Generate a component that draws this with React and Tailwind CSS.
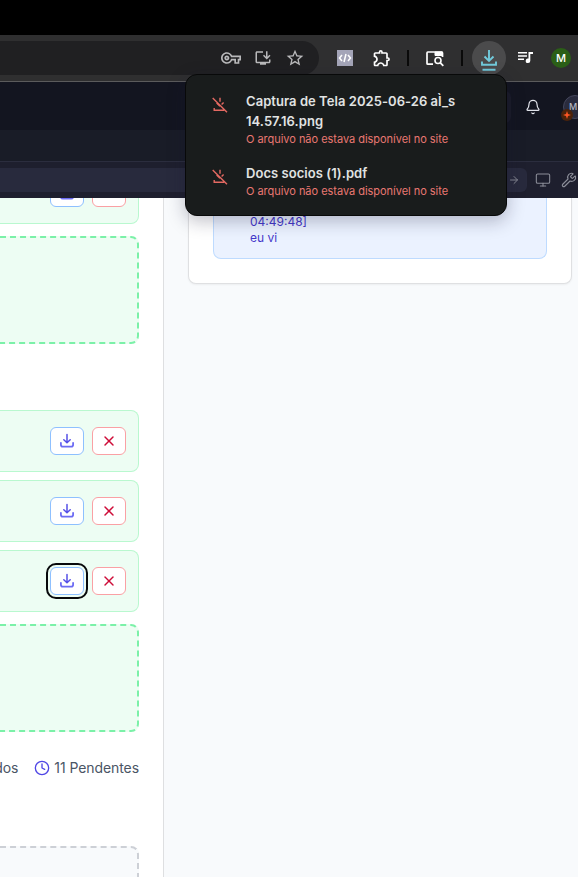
import { MdOutlineVpnKey, MdOutlineInstallDesktop, MdStarBorder, MdOutlineExtension } from "react-icons/md";
import { Bell, Monitor, Wrench, ArrowRight, X, Clock } from "lucide-react";

function TrayIcon() {
  return (
    <svg width="16" height="16" viewBox="0 0 16 16" fill="none" strokeLinecap="round" strokeLinejoin="round">
      <path d="M1.900 9.800v1.900c0 1.200.7 1.900 1.900 1.900h8.400c1.200 0 1.900-.7 1.900-1.900V9.800" stroke="#6d6cf3" strokeWidth="1.800" />
      <path d="M8 1.500v8M4.800 6.700 8 9.700l3.200-3" stroke="#5650e6" strokeWidth="1.500" />
    </svg>
  );
}

function FailedDownloadIcon() {
  return (
    <svg className="mt-[6px] shrink-0" width="16" height="16" viewBox="0 0 16 16" fill="none" stroke="#e46962" strokeWidth="1.400">
      <path d="M.7.9l14.300 14.300M8 .8v4M11.600 5.500 9.600 7.500M4.600 6 8 9.200M2.200 11v2.300h10" />
    </svg>
  );
}

function FileRow({ focused = false }) {
  return (
    <div className="flex h-[62px] shrink-0 items-center justify-end gap-2 rounded-r-lg border border-l-0 border-[#b9f8cf] bg-[#edfdf3] pr-3">
      <button
        className={
          "flex h-7 w-[34px] items-center justify-center rounded-md border border-[#8ec0ff] bg-white " +
          (focused ? "outline-2 outline-offset-2 outline-[#080a0c]" : "")
        }
      >
        <TrayIcon />
      </button>
      <button className="flex h-7 w-[34px] items-center justify-center rounded-md border border-[#faa0a4] bg-white">
        <X size={16} strokeWidth={2.200} color="#ce0c38" />
      </button>
    </div>
  );
}

function DropArea() {
  return <div className="h-[108px] shrink-0 rounded-r-lg border-2 border-l-0 border-dashed border-[#7bf1a8] bg-[#edfdf3]" />;
}

function Toolbar() {
  return (
    <div className="flex h-[47px] shrink-0 border-b border-[#5b5b5c] bg-[#2f2f30] pt-[6px]">
      <div className="flex h-[34px] w-[319px] shrink-0 items-center justify-end rounded-r-full bg-[#202022] pr-[14px] text-[#b9b9bb]">
        <MdOutlineVpnKey size={20} className="mr-[13px]" />
        <MdOutlineInstallDesktop size={18} className="mr-[13px]" />
        <MdStarBorder size={20} />
      </div>
      <div className="flex h-[34px] items-center">
        <div className="ml-[18px] flex size-4 items-center justify-center bg-[#a4a5b8]">
          <svg width="14" height="10" viewBox="0 0 14 10" fill="none" stroke="white" strokeWidth="1.500">
            <path d="M4 2 1.500 5 4 8M10 2l2.500 3L10 8M8 1 6 9" />
          </svg>
        </div>
        <MdOutlineExtension size={20} color="white" className="ml-[19px]" />
        <div className="ml-[15px] h-4 w-[2px] bg-[#0a0a0a]" />
        <svg className="ml-[16px]" width="20" height="18" viewBox="0 0 20 18" fill="none" stroke="white">
          <path d="M8 15.200H2.800c-.6 0-.8-.3-.8-.8V3.900c0-.6.3-.9.8-.9h13.900c.5 0 .8.3.8.9V8" strokeWidth="1.700" />
          <path d="M10 3h7.500v3.500H10z" fill="white" strokeWidth="1" />
          <circle cx="13" cy="11.500" r="3" strokeWidth="1.600" />
          <path d="m15.300 13.800 3 3" strokeWidth="1.800" />
        </svg>
        <div className="ml-[16px] h-4 w-[2px] bg-[#0a0a0a]" />
        <div className="ml-[9px] flex size-[34px] items-center justify-center rounded-full bg-[#4b4b4c]">
          <svg className="mt-[4px]" width="18" height="23" viewBox="0 0 18 23" fill="none" stroke="#72cbdc" strokeWidth="1.900">
            <path d="M9 1v11M4.500 7.500 9 12l4.500-4.500M2 12.500v3.300h14v-3.300M2.500 20.800h13" />
          </svg>
        </div>
        <svg className="ml-[12px]" width="16" height="14" viewBox="0 0 16 14" fill="white">
          <path d="M0 1h9v1.600H0zM0 4.200h9v1.600H0zM0 7.400h6v1.600H0z" />
          <path d="M10.500 1H15v2h-2.700v6.700a2.300 2.300 0 1 1-1.800-2.200z" />
        </svg>
        <div className="ml-[17px] flex size-5 items-center justify-center rounded-full bg-[#2b5f17] text-[11px] font-medium text-white">M</div>
      </div>
    </div>
  );
}

function SiteHeader() {
  return (
    <div className="shrink-0 bg-[#131520]">
      <div className="flex h-12 items-center justify-end overflow-hidden pt-[2px]">
        <div className="h-8 w-6 shrink-0 rounded-md bg-[#1a1b28]" />
        <Bell size={16} strokeWidth={1.800} color="#e1e3ea" className="mr-[22px] ml-[14px]" />
        <div className="relative h-6 w-[15px] shrink-0">
          <div className="flex size-6 items-center justify-start rounded-full border border-[#44465b] bg-[#292b3d] pl-[5px] text-[9px] font-medium text-[#b3b5c1]">M</div>
          <div className="absolute top-[14px] left-[-2px] flex size-3 items-center justify-center rounded-full bg-[#4b230b]">
            <svg width="8" height="8" viewBox="0 0 8 8">
              <path d="M4 0 5 3 8 4 5 5 4 8 3 5 0 4l3-1z" fill="#ff5724" />
            </svg>
          </div>
        </div>
      </div>
      <div className="h-8 border-b border-[#2b2d3e] bg-[#191c27]" />
      <div className="flex h-9 items-center overflow-hidden bg-[#1e1f2e]">
        <div className="flex h-6 w-[527px] shrink-0 items-center justify-end rounded-r-md bg-[#282a3d] pr-[7px]">
          <ArrowRight size={12} strokeWidth={2} color="#858793" />
        </div>
        <Monitor size={16} strokeWidth={1.600} color="#8b8d98" className="ml-2 shrink-0" />
        <Wrench size={16} strokeWidth={1.700} color="#8b8d98" className="ml-[10px] shrink-0" />
      </div>
    </div>
  );
}

function DownloadsPopup() {
  return (
    <div className="absolute top-[74px] left-[185px] flex h-[142px] w-[322px] flex-col gap-[12px] rounded-xl border border-[#080909] bg-[#191c1c] pt-[16px] pl-[26px] shadow-[0_5px_18px_rgba(20,20,50,0.28)]">
      <div className="flex gap-[18px]">
        <FailedDownloadIcon />
        <div className="whitespace-nowrap">
          <p className="text-[13px] leading-5 font-semibold tracking-[0.05px] text-[#e1e3e3]">Captura de Tela 2025-06-26 aÌ_s<br />14.57.16.png</p>
          <p className="text-[11px] leading-4 tracking-[-0.03px] text-[#e97872]">O arquivo não estava disponível no site</p>
        </div>
      </div>
      <div className="flex gap-[18px] pt-[4px]">
        <FailedDownloadIcon />
        <div className="whitespace-nowrap">
          <p className="text-[13px] leading-5 font-semibold tracking-[0.05px] text-[#e1e3e3]">Docs socios (1).pdf</p>
          <p className="text-[11px] leading-4 tracking-[-0.03px] text-[#e97872]">O arquivo não estava disponível no site</p>
        </div>
      </div>
    </div>
  );
}

export default function App() {
  return (
    <div className="relative flex h-[877px] w-[578px] flex-col overflow-hidden bg-[#f8fafc] font-['Inter',sans-serif]">
      <div className="h-[35px] shrink-0 bg-black" />
      <Toolbar />
      <SiteHeader />
      <main className="flex min-h-0 flex-1 overflow-hidden">
        <section className="flex w-[164px] shrink-0 flex-col border-r border-[#dedfe1] bg-white pr-6">
          <div className="flex h-[26px] shrink-0 flex-col justify-end overflow-hidden">
            <FileRow />
          </div>
          <div className="mt-3 flex flex-col"><DropArea /></div>
          <div className="mt-[66px] flex flex-col gap-2">
            <FileRow />
            <FileRow />
            <FileRow focused />
          </div>
          <div className="mt-3 flex flex-col"><DropArea /></div>
          <div className="mt-[25px] flex h-5 shrink-0 items-center justify-end text-[14px] tracking-[-0.08px] whitespace-nowrap text-[#4a5565]">
            <span>dos</span>
            <Clock size={16} strokeWidth={2} color="#4f46e5" className="mt-[2px] mr-1 ml-4 shrink-0" />
            <span>11 Pendentes</span>
          </div>
          <div className="mt-[69px] h-[31px] shrink-0 rounded-tr-lg border-t-2 border-r-2 border-dashed border-[#cdd0d6] bg-[#f8fafc]" />
        </section>
        <section className="ml-6 h-[86px] w-[384px] shrink-0 rounded-b-lg border border-t-0 border-[#dfe0e2] bg-white px-6 shadow-xs">
          <div className="h-[61px] rounded-b-lg border border-t-0 border-[#bedbff] bg-[#ebf2ff] pt-4 pl-9 text-[12px] leading-4 text-[#4538ca]">
            04:49:48]<br />eu vi
          </div>
        </section>
      </main>
      <DownloadsPopup />
    </div>
  );
}
